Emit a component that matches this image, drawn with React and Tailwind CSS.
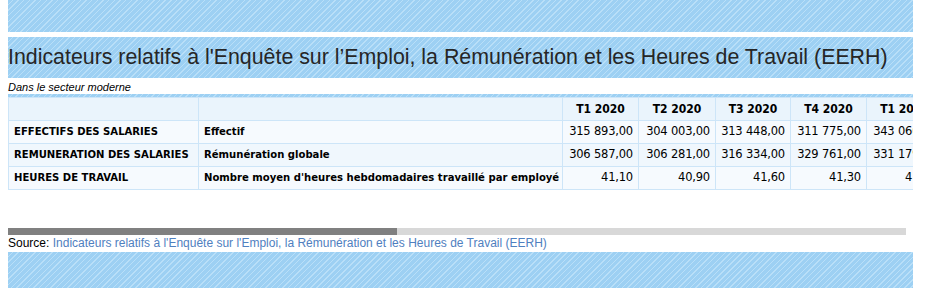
import React from "react";

const stripe =
  "bg-[#9dd0f3] bg-[repeating-linear-gradient(135deg,#9dd0f3_0px,#9dd0f3_3px,#b9dff8_3px,#b9dff8_4px)]";

const cols = ["T1 2020", "T2 2020", "T3 2020", "T4 2020", "T1 2021"];
const rows = [
  ["EFFECTIFS DES SALARIES", "Effectif", ["315 893,00", "304 003,00", "313 448,00", "311 775,00", "343 060,00"]],
  ["REMUNERATION DES SALARIES", "Rémunération globale", ["306 587,00", "306 281,00", "316 334,00", "329 761,00", "331 179,00"]],
  ["HEURES DE TRAVAIL", "Nombre moyen d'heures hebdomadaires travaillé par employé", ["41,10", "40,90", "41,60", "41,30", "41,20"]],
];

const colW = ["w-[76px]", "w-[77px]", "w-[75px]", "w-[76px]", "w-[76px]"];
const bold = "font-['DejaVu_Sans_Condensed','DejaVu_Sans',sans-serif] font-bold";

export default function App() {
  return (
    <div className="w-[944px] h-[290px] bg-white overflow-hidden font-['Liberation_Sans',Arial,sans-serif]">
      <div className="ml-2 w-[905px]">
        <div className={`h-[32px] ${stripe}`} />
        <div className={`mt-[5px] h-[41px] ${stripe} flex items-center`}>
          <h1 className="text-[21.35px] leading-none text-[#262626]">
            Indicateurs relatifs à l'Enquête sur l’Emploi, la Rémunération et les Heures de Travail (EERH)
          </h1>
        </div>
        <div className="pt-[2px] h-[16px] text-[11px] leading-[14px] italic text-black">Dans le secteur moderne</div>
        <div className="h-[134px] overflow-hidden">
          <div className={`h-[3px] w-[905px] ${stripe}`} />
          <table className="border-collapse text-[12px] text-black font-['DejaVu_Sans',sans-serif] whitespace-nowrap table-fixed w-[934px]">
            <thead>
              <tr className="h-[23px] bg-[#eaf4fc]">
                <th className="w-[190px] border border-[#cde5f8]" />
                <th className="w-[364px] border border-[#cde5f8]" />
                {cols.map((c, i) => (
                  <th key={c} className={`${colW[i]} border border-[#cde5f8] ${bold} text-center px-[5px] text-[12px]`}>
                    {c}
                  </th>
                ))}
              </tr>
            </thead>
            <tbody>
              {rows.map((r, ri) => (
                <tr key={ri} className={`h-[23px] ${ri === 1 ? "bg-[#f0f7fd]" : "bg-[#f6fafe]"}`}>
                  <td className={`border border-[#cde5f8] ${bold} px-[5px] text-[11.2px]`}>{r[0]}</td>
                  <td className={`border border-[#cde5f8] ${bold} px-[5px] text-[11.2px]`}>{r[1]}</td>
                  {r[2].map((v, i) => (
                    <td key={i} className="border border-[#cde5f8] text-right px-[5px] text-[11.5px] tracking-[-0.2px]">
                      {v}
                    </td>
                  ))}
                </tr>
              ))}
            </tbody>
          </table>
        </div>
        <div className="h-[7px] w-[898px] bg-[#d8d8d8] flex">
          <div className="h-full w-[389px] bg-[#808080]" />
        </div>
        <div className="h-[17px] text-[12px] leading-[16px] text-black">
          Source: <span className="text-[#4f80c0]">Indicateurs relatifs à l'Enquête sur l'Emploi, la Rémunération et les Heures de Travail (EERH)</span>
        </div>
        <div className={`h-[36px] ${stripe}`} />
      </div>
    </div>
  );
}
